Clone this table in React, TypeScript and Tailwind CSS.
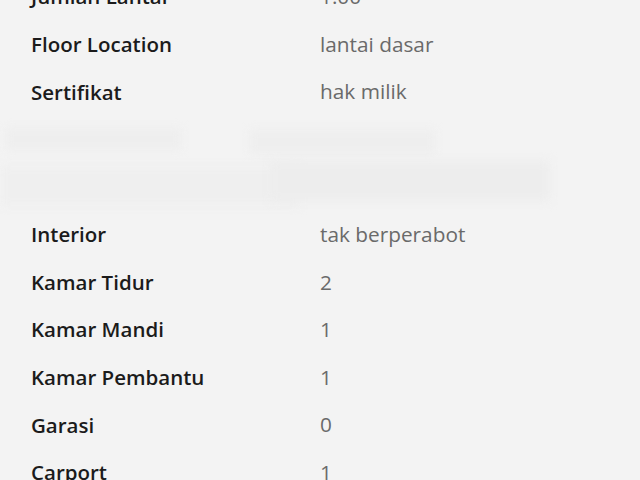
import React from "react";

const rowsTop: [string, string][] = [
  ["Jumlah Lantai", "1.00"],
  ["Floor Location", "lantai dasar"],
  ["Sertifikat", "hak milik"],
];
const rowsBottom: [string, string][] = [
  ["Interior", "tak berperabot"],
  ["Kamar Tidur", "2"],
  ["Kamar Mandi", "1"],
  ["Kamar Pembantu", "1"],
  ["Garasi", "0"],
  ["Carport", "1"],
];

function Row({ label, value }: { label: string; value: string }) {
  return (
    <div className="flex h-[47.6px] items-center">
      <div className="w-[320px] shrink-0 pl-[31px] text-[20.5px] font-semibold text-[#1b1b1b]">{label}</div>
      <div className="text-[20.8px] font-normal text-[#6a6a6a]">{value}</div>
    </div>
  );
}

export default function App() {
  return (
    <div
      className="h-[480px] w-[640px] overflow-hidden bg-[#f3f3f3]"
      style={{ fontFamily: '"Open Sans", "Noto Sans", sans-serif' }}
    >
      <div className="mt-[-27px] flex flex-col">
        {rowsTop.map(([l, v]) => (
          <Row key={l} label={l} value={v} />
        ))}
        <div className="relative h-[95px]">
          <div className="absolute left-[6px] top-[12px] h-[22px] w-[175px] bg-[#eeeeee] blur-[4px]" />
          <div className="absolute left-[250px] top-[14px] h-[24px] w-[185px] bg-[#eeeeee] blur-[4px]" />
          <div className="absolute left-[0px] top-[50px] h-[40px] w-[300px] bg-[#efefef] blur-[5px]" />
          <div className="absolute left-[270px] top-[45px] h-[40px] w-[280px] bg-[#ededed] blur-[5px]" />
        </div>
        {rowsBottom.map(([l, v]) => (
          <Row key={l} label={l} value={v} />
        ))}
      </div>
    </div>
  );
}
